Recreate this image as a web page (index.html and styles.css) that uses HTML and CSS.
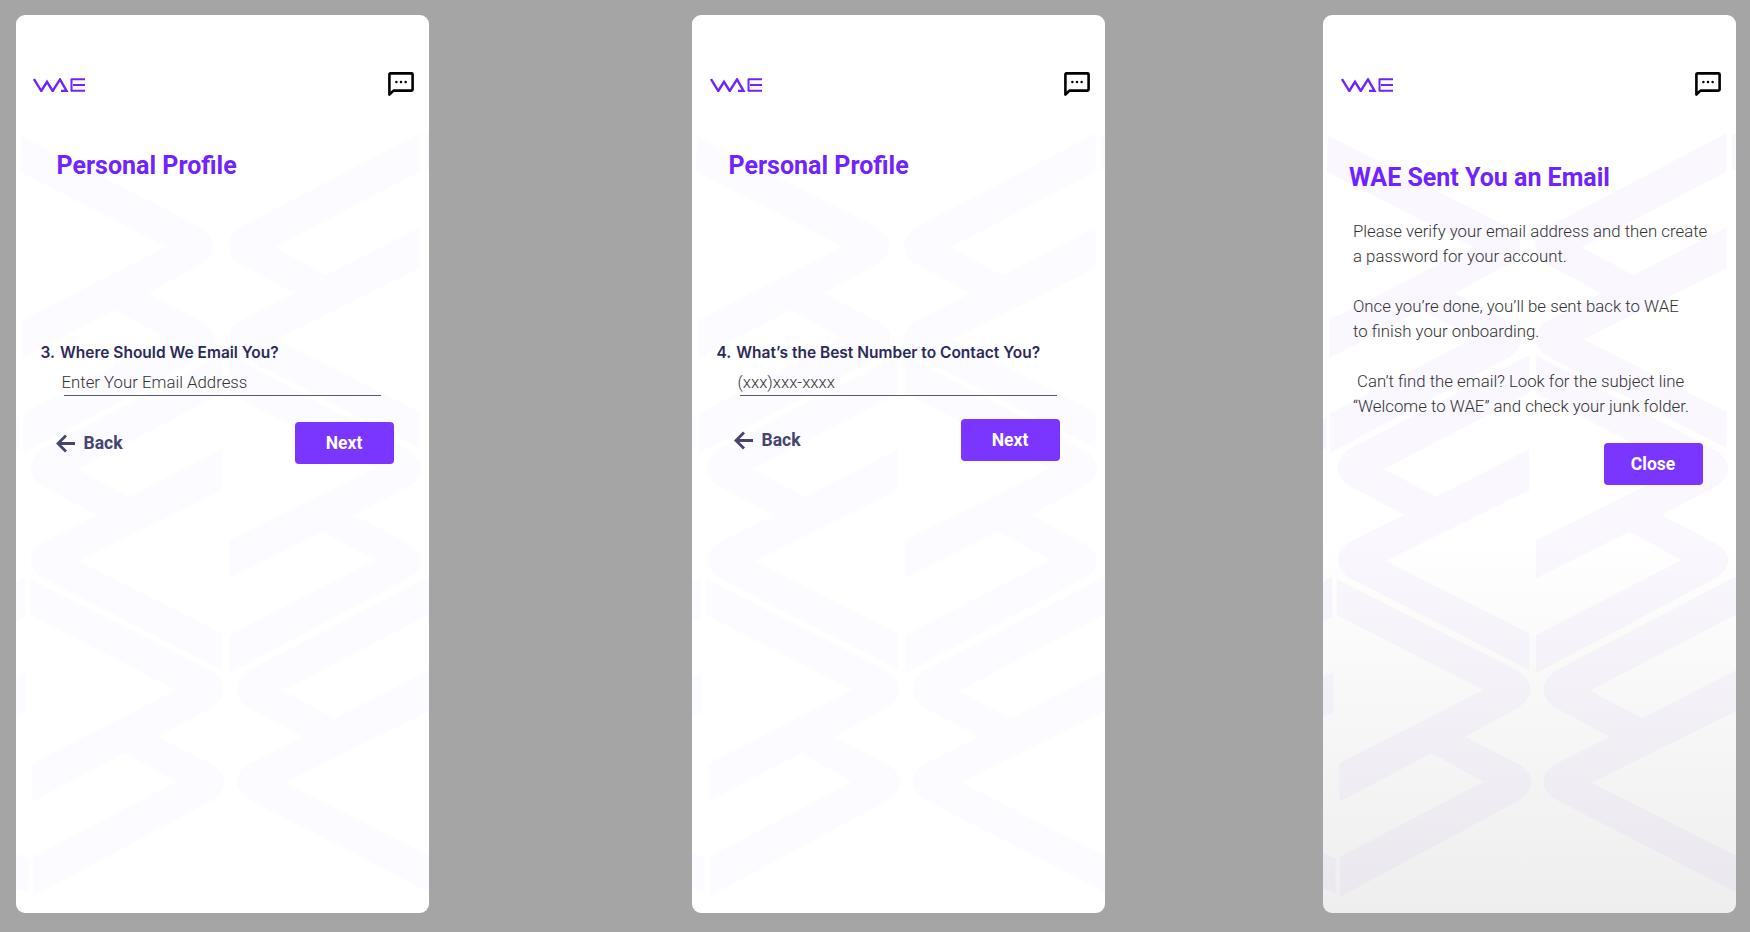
FILE: index.html
```html
<!DOCTYPE html>
<html lang="en">
<head>
    <meta charset="UTF-8">
    <meta name="viewport" content="width=device-width, initial-scale=1.0">
    <title>WAE - Onboarding</title>
    <link rel="stylesheet" href="styles.css">
</head>
<body>

    <svg class="defs" width="0" height="0" aria-hidden="true">
        <defs>
            <g id="bg-pattern">
                <path d="M25 407L570 685Q634 740 570 790L405 880L570 965Q640 1015 570 1070L30 1360V1240L460 1015L305 930L28 1075V960L460 740L20 515Z"/>
                <path d="M1220 400L675 685Q615 740 675 790L845 880L675 965Q615 1015 675 1065L1220 1345V1235L790 1018L1220 805V682L940 825L785 742L1220 515Z"/>
                <path d="M628 1065L83 1350Q23 1405 83 1455L253 1545L83 1630Q23 1680 83 1730L628 2010V1900L198 1683L628 1470V1347L348 1490L193 1407L628 1180Z"/>
                <path d="M648 1065L1195 1355Q1255 1405 1195 1455L1025 1545L1195 1635Q1255 1680 1195 1730L648 2020V1905L1085 1680L928 1595L648 1735V1620L1085 1405L648 1180Z"/>
                <path d="M50 1737L600 2015Q664 2070 600 2120L435 2210L600 2295Q670 2345 600 2400L60 2690V2570L490 2345L335 2260L58 2405V2290L490 2070L50 1845Z"/>
                <path d="M1255 1725L700 2015Q640 2070 700 2120L870 2210L700 2295Q640 2345 700 2395L1255 2680V2570L815 2348L1255 2130V2007L965 2155L810 2072L1255 1840Z"/>
                <path d="M9 1745L37 1730V1850L9 1865ZM9 2030L40 2015V2135L9 2150ZM9 2560L47 2575V2680L9 2665ZM9 1255L20 1250V1350L9 1345ZM1235 405L1251 400V505L1235 512Z"/>
            </g>
            <g id="wae-logo">
                <path d="M1 1L8.3 13L14 3.8L19.7 13L27 1.4L33.6 13H28" fill="none" stroke-width="2.4"/>
                <path d="M38.5 0.8V13.2M38 1.2H52M40 7H52M38 12.8H52" fill="none" stroke-width="2"/>
            </g>
            <g id="chat-icon">
                <path d="M1.4 22.5V2.5Q1.4 1.4 2.5 1.4H23.5Q24.6 1.4 24.6 2.5V17.5Q24.6 18.6 23.5 18.6H5.5Z" fill="none" stroke="#000" stroke-width="2.6" stroke-linejoin="round"/>
                <circle cx="8.4" cy="10" r="1.25"/>
                <circle cx="13" cy="10" r="1.25"/>
                <circle cx="17.6" cy="10" r="1.25"/>
            </g>
            <g id="back-arrow">
                <path d="M19 9.5H2M10 1.5L2 9.5L10 17.5" fill="none" stroke="#45456f" stroke-width="2.8"/>
            </g>
        </defs>
    </svg>

    <section class="phone phone-email">
        <svg class="bg-pattern" viewBox="9 45 1242 2694"><use href="#bg-pattern"/></svg>
        <header class="phone-header">
            <svg class="logo" viewBox="0 0 52 14"><use href="#wae-logo"/></svg>
            <svg class="chat-icon" viewBox="0 0 26 24"><use href="#chat-icon"/></svg>
        </header>
        <h1 class="title">Personal Profile</h1>
        <div class="question">
            <span class="question-number">3.</span>
            <span>Where Should We Email You?</span>
        </div>
        <div class="field"><span>Enter Your Email Address</span></div>
        <div class="actions">
            <a class="back-link">
                <svg class="back-arrow" viewBox="0 0 19 19"><use href="#back-arrow"/></svg>
                <span>Back</span>
            </a>
            <a class="primary-button">Next</a>
        </div>
    </section>

    <section class="phone phone-number">
        <svg class="bg-pattern" viewBox="9 45 1242 2694"><use href="#bg-pattern"/></svg>
        <header class="phone-header">
            <svg class="logo" viewBox="0 0 52 14"><use href="#wae-logo"/></svg>
            <svg class="chat-icon" viewBox="0 0 26 24"><use href="#chat-icon"/></svg>
        </header>
        <h1 class="title">Personal Profile</h1>
        <div class="question">
            <span class="question-number">4.</span>
            <span>What’s the Best Number to Contact You?</span>
        </div>
        <div class="field"><span>(xxx)xxx-xxxx</span></div>
        <div class="actions">
            <a class="back-link">
                <svg class="back-arrow" viewBox="0 0 19 19"><use href="#back-arrow"/></svg>
                <span>Back</span>
            </a>
            <a class="primary-button">Next</a>
        </div>
    </section>

    <section class="phone phone-sent">
        <svg class="bg-pattern" viewBox="9 45 1242 2694"><use href="#bg-pattern"/></svg>
        <header class="phone-header">
            <svg class="logo" viewBox="0 0 52 14"><use href="#wae-logo"/></svg>
            <svg class="chat-icon" viewBox="0 0 26 24"><use href="#chat-icon"/></svg>
        </header>
        <h1 class="title">WAE Sent You an Email</h1>
        <div class="message">
            <p>Please verify your email address and then create<br>a password for your account.</p>
            <p>Once you’re done, you’ll be sent back to WAE<br>to finish your onboarding.</p>
            <p>&nbsp;Can’t find the email? Look for the subject line<br>“Welcome to WAE” and check your junk folder.</p>
        </div>
        <div class="actions">
            <a class="primary-button">Close</a>
        </div>
    </section>

</body>
</html>
```
FILE: styles.css
```css
:root {
    --primary-color: #7a36ff;
    --title-color: #6f24ff;
    --question-color: #2b2a58;
    --muted-color: #45456f;
    --page-color: #a5a5a5;
    --font-family: Roboto, "Liberation Sans", sans-serif;
    --font-family-question: Inter, Roboto, sans-serif;
}
body, html {
    margin: 0;
    height: 100%;
    font-family: var(--font-family);
    background-color: var(--page-color);
}
body {
    display: flex;
    align-items: flex-start;
    overflow: hidden;
}
.defs {
    position: absolute;
}

/* --- PHONE FRAME --- */
.phone {
    position: relative;
    display: flex;
    flex-direction: column;
    flex: none;
    box-sizing: border-box;
    width: 413.5px;
    height: 898px;
    margin-top: 15px;
    background-color: #fff;
    border-radius: 9px;
    overflow: hidden;
}
.phone-email { margin-left: 15.5px; }
.phone-number { margin-left: 262.5px; }
.phone-sent { margin-left: 217.5px; }
.phone > * {
    position: relative;
}
.phone > .bg-pattern {
    position: absolute;
    top: 0;
    left: 0;
    width: 414px;
    height: 898px;
    fill: #fcfbff;
}
.phone-sent > .bg-pattern {
    fill: #faf7ff;
}
.phone-sent::before {
    content: "";
    position: absolute;
    inset: 0;
    z-index: 1;
    background: linear-gradient(to bottom, rgba(0, 0, 0, 0) 58%, rgba(0, 0, 0, 0.065) 100%);
}
.phone-sent > :not(.bg-pattern) {
    z-index: 2;
}

/* --- HEADER --- */
.phone-header {
    display: flex;
    justify-content: space-between;
    align-items: flex-start;
    padding: 57px 15px 0 18px;
}
.phone-email .phone-header { padding-left: 17px; }
.logo {
    width: 52px;
    height: 14px;
    margin-top: 6px;
    stroke: var(--title-color);
}
.chat-icon {
    width: 26px;
    height: 24px;
}

/* --- CONTENT --- */
.title {
    margin: 56px 0 0 41px;
    font-size: 25px;
    line-height: 28px;
    font-weight: 700;
    color: var(--title-color);
}
.phone-number .title { margin-left: 37px; }
.phone-sent .title {
    margin: 68px 0 0 26.5px;
}
.question {
    display: flex;
    gap: 5px;
    margin: 163px 0 0 25px;
    font-family: var(--font-family-question);
    font-size: 15.5px;
    line-height: 20px;
    font-weight: 600;
    color: var(--question-color);
}
.field {
    box-sizing: border-box;
    width: 317px;
    height: 23px;
    margin: 10px 0 0 48px;
    font-size: 16.8px;
    line-height: 19px;
    font-weight: 300;
    color: #333;
    border-bottom: 1px solid #5a5a78;
}
.field span {
    margin-left: -2px;
}
.message {
    margin: 27px 0 0 30.5px;
    font-size: 16.8px;
    line-height: 25px;
    font-weight: 300;
    color: #333;
}
.message p {
    margin: 0 0 25px 0;
}
.message p:last-child {
    margin-bottom: 0;
}

/* --- ACTIONS --- */
.actions {
    display: flex;
    justify-content: space-between;
    align-items: center;
    width: 338px;
    margin: 26px 0 0 40px;
}
.phone-number .actions {
    width: 326px;
    margin: 23px 0 0 42px;
}
.phone-sent .actions {
    justify-content: flex-end;
    width: 99px;
    margin: 24px 0 0 281px;
}
.back-link {
    display: flex;
    align-items: center;
    gap: 9px;
    font-size: 17.5px;
    line-height: 20px;
    font-weight: 700;
    color: var(--muted-color);
}
.back-arrow {
    width: 19px;
    height: 19px;
}
.primary-button {
    box-sizing: border-box;
    width: 99px;
    height: 42px;
    line-height: 42px;
    text-align: center;
    font-size: 17.5px;
    font-weight: 700;
    color: #fff;
    background-color: var(--primary-color);
    border-radius: 4px;
}
```
